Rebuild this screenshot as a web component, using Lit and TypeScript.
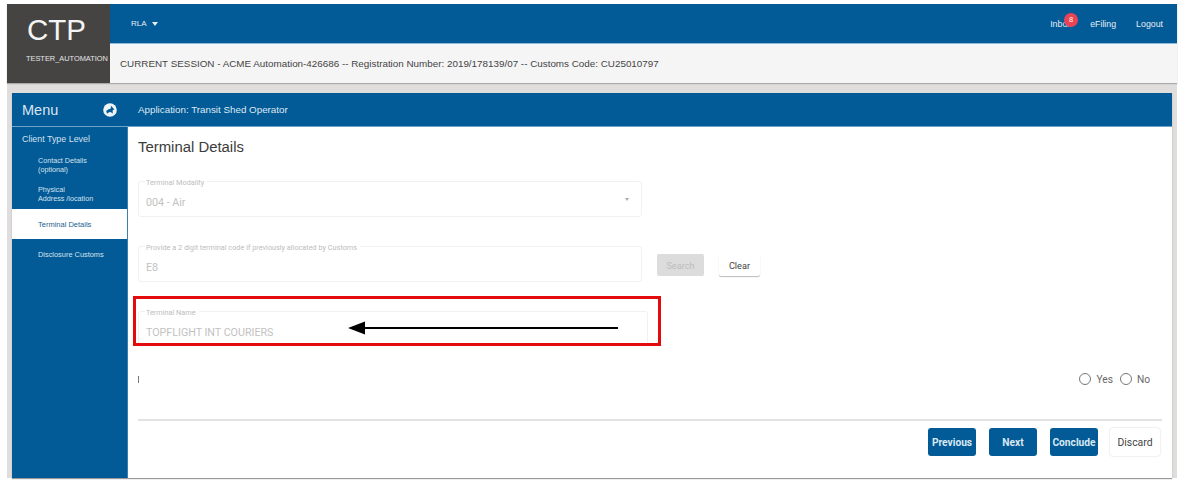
import { LitElement, html, css } from "lit";
import { customElement } from "lit/decorators.js";

@customElement("app-root")
export class AppRoot extends LitElement {
  static styles = css`
    :host { display: block; width: 1187px; height: 490px; background: #fff; font-family: "Liberation Sans", Arial, sans-serif; position: relative; overflow: hidden; }
    * { box-sizing: border-box; }
    .page { padding: 4px 10px 0 7px; display: flex; flex-direction: column; height: 478px; }
    .header { display: flex; height: 79px; flex: none; box-shadow: 0 1px 1px #aaa; position: relative; }
    .logo { width: 103px; background: #454443; color: #fff; display: flex; flex-direction: column; align-items: flex-start; }
    .ctp { font-size: 29.5px; line-height: 32px; margin: 10px 0 0 20px; color: #f4f4f4; }
    .tester { font-size: 7.4px; line-height: 10px; margin: 8px 0 0 19px; white-space: nowrap; color: #e6e6e6; }
    .hr { flex: 1; display: flex; flex-direction: column; min-width: 0; }
    .nav { height: 40px; background: #025a96; border-bottom: 1px solid #8dbbdc; color: #e6eef5; font-size: 8px; display: flex; align-items: center; padding: 0 14px 0 21px; }
    .rla { display: flex; align-items: center; gap: 5px; }
    .caret { width: 0; height: 0; border: 3px solid transparent; border-top: 4px solid #e6eef5; border-bottom: 0; }
    .links { margin-left: auto; display: flex; gap: 20px; align-items: center; font-size: 8.8px; }
    .links span { line-height: 10px; }
    .inbox { position: relative; width: 20px; white-space: nowrap; }
    .links .badge { position: absolute; left: 14px; top: -6px; width: 14px; height: 14px; border-radius: 50%; background: #ea4358; color: #ffd; font-size: 7.5px; line-height: 14px; text-align: center; }
    .session { flex: 1; background: #f5f5f5; color: #444; font-size: 9.85px; display: flex; align-items: center; padding: 0 0 0 10px; white-space: nowrap; }
    .wrap { flex: 1; background: #dfdedc; padding: 10px 5px 0 5px; display: flex; min-height: 0; }
    .card { flex: 1; background: #fff; display: flex; flex-direction: column; box-shadow: 0 1px 1px #999; }
    .bar { height: 34px; flex: none; background: #025a96; display: flex; align-items: center; color: #dfe9f2; border-bottom: 1px solid #6ea3c8; }
    .menu { width: 116px; display: flex; align-items: center; justify-content: space-between; padding: 0 11px 0 10px; font-size: 14.5px; color: #d9e6f0; height: 100%; }
    .menu svg { display: block; }
    .apptitle { font-size: 9.8px; padding-left: 10px; }
    .body { flex: 1; display: flex; min-height: 0; }
    .side { width: 116px; background: #025a96; color: #d4e2ee; flex: none; border-right: 1px solid #3b7fb0; }
    .lvl { font-size: 8.9px; padding: 7px 0 0 10px; line-height: 10px; height: 24px; }
    .item { padding-left: 26px; line-height: 9px; font-size: 7.2px; display: flex; flex-direction: column; justify-content: center; }
    .i1 { height: 28px; }
    .i2 { height: 30px; }
    .active { height: 30px; background: #fff; color: #1d5f8f; font-size: 7.5px; }
    .i4 { height: 30px; font-size: 7.4px; }
    .main { flex: 1; padding: 0 10px 0 10px; display: flex; flex-direction: column; min-width: 0; }
    h1 { font-size: 14.9px; font-weight: 400; color: #3c3c3c; margin: 10px 0 0; line-height: 20px; }
    .row { display: flex; align-items: center; }
    .field { border: 1px solid #f1f1f1; border-radius: 3px; position: relative; color: #c2c2c2; font-family: Roboto, sans-serif; width: 504px; }
    .legend { position: absolute; left: 6px; top: -4px; background: #fff; padding: 0 3px 0 1px; font-size: 7.3px; line-height: 9px; color: #bdbdbd; white-space: nowrap; }
    .val { font-size: 10.7px; padding-left: 7px; }
    .f1 { height: 36px; margin-top: 24px; line-height: 38px; }
    .sel { position: absolute; right: 12px; top: 16px; width: 0; height: 0; border: 2.5px solid transparent; border-top: 3px solid #aaa; border-bottom: 0; }
    .r2 { margin-top: 29px; }
    .f2 { height: 36px; line-height: 38px; }
    .btn { height: 22px; border-radius: 2px; font-family: Roboto, sans-serif; font-size: 9.2px; display: flex; align-items: center; justify-content: center; margin-top: 2px; }
    .search { width: 47px; margin-left: 15px; background: #dcdcdc; color: #bcbcbc; }
    .clear { width: 41px; margin-left: 15px; background: #fff; color: #444; box-shadow: 0 1px 1px #bbb; }
    .f3 { width: 510px; height: 34px; line-height: 37px; margin-top: 29px; }
    .q { margin-top: 18px; display: flex; align-items: center; justify-content: space-between; height: 32px; font-family: Roboto, sans-serif; font-size: 10.2px; color: #666; padding-right: 12px; }
    .tick { width: 1px; height: 7px; background: #777; }
    .radios { display: flex; align-items: center; gap: 5px; }
    .radio { width: 12px; height: 12px; border-radius: 50%; border: 1px solid #777; }
    .radios span + .radio { margin-left: 2px; }
    .rule { height: 2px; background: #e2e2e2; margin-top: 24px; }
    .actions { display: flex; justify-content: flex-end; gap: 13px; margin-top: 7px; padding-right: 2px; }
    .act { width: 48px; height: 28px; border-radius: 3px; background: #025a96; color: #d9e8f3; font-family: Roboto, sans-serif; font-size: 10.2px; font-weight: 700; display: flex; align-items: center; justify-content: center; white-space: nowrap; }
    .act.white { background: #fff; color: #444; font-weight: 400; width: 50px; margin-left: -1px; box-shadow: 0 0 2px #ccc; font-size: 10.4px; }
    .redbox { position: absolute; left: 133px; top: 296px; width: 528px; height: 50px; border: 3px solid #e30b0b; pointer-events: none; }
    .arrow { position: absolute; left: 345px; top: 319px; }
  `;

  render() {
    return html`
      <div class="page">
        <div class="header">
          <div class="logo">
            <div class="ctp">CTP</div>
            <div class="tester">TESTER_AUTOMATION</div>
          </div>
          <div class="hr">
            <div class="nav">
              <div class="rla">RLA <span class="caret"></span></div>
              <div class="links">
                <span class="inbox">Inbox<span class="badge">8</span></span>
                <span>eFiling</span>
                <span>Logout</span>
              </div>
            </div>
            <div class="session">CURRENT SESSION - ACME Automation-426686 -- Registration Number: 2019/178139/07 -- Customs Code: CU25010797</div>
          </div>
        </div>
        <div class="wrap">
          <div class="card">
            <div class="bar">
              <div class="menu">
                <span>Menu</span>
                <svg width="14" height="14" viewBox="0 0 14 14">
                  <circle cx="7" cy="7" r="6.8" fill="#eef3f7" />
                  <path d="M8 2.8 L11.4 6.4 L9.6 7.2 L9.8 10.4 L7.2 8.8 L4 10.6 L3.2 8 L5.2 6.4 L7.8 5.6 Z" fill="#025a96" />
                </svg>
              </div>
              <div class="apptitle">Application: Transit Shed Operator</div>
            </div>
            <div class="body">
              <div class="side">
                <div class="lvl">Client Type Level</div>
                <div class="item i1"><span>Contact Details</span><span>(optional)</span></div>
                <div class="item i2"><span>Physical</span><span>Address /location</span></div>
                <div class="item active">Terminal Details</div>
                <div class="item i4">Disclosure Customs</div>
              </div>
              <div class="main">
                <h1>Terminal Details</h1>
                <div class="field f1">
                  <span class="legend">Terminal Modality</span>
                  <span class="val">004 - Air</span>
                  <span class="sel"></span>
                </div>
                <div class="row r2">
                  <div class="field f2">
                    <span class="legend">Provide a 2 digit terminal code if previously allocated by Customs</span>
                    <span class="val">E8</span>
                  </div>
                  <div class="btn search">Search</div>
                  <div class="btn clear">Clear</div>
                </div>
                <div class="field f3">
                  <span class="legend">Terminal Name</span>
                  <span class="val">TOPFLIGHT INT COURIERS</span>
                </div>
                <div class="q">
                  <span class="tick"></span>
                  <div class="radios">
                    <span class="radio"></span><span>Yes</span>
                    <span class="radio"></span><span>No</span>
                  </div>
                </div>
                <div class="rule"></div>
                <div class="actions">
                  <div class="act">Previous</div>
                  <div class="act">Next</div>
                  <div class="act">Conclude</div>
                  <div class="act white">Discard</div>
                </div>
              </div>
            </div>
          </div>
        </div>
      </div>
      <div class="redbox"></div>
      <svg class="arrow" width="280" height="18" viewBox="0 0 280 18">
        <path d="M273 9 H18" stroke="#000" stroke-width="2" fill="none" />
        <path d="M3 9 L20 2.5 V15.5 Z" fill="#000" />
      </svg>
    `;
  }
}
